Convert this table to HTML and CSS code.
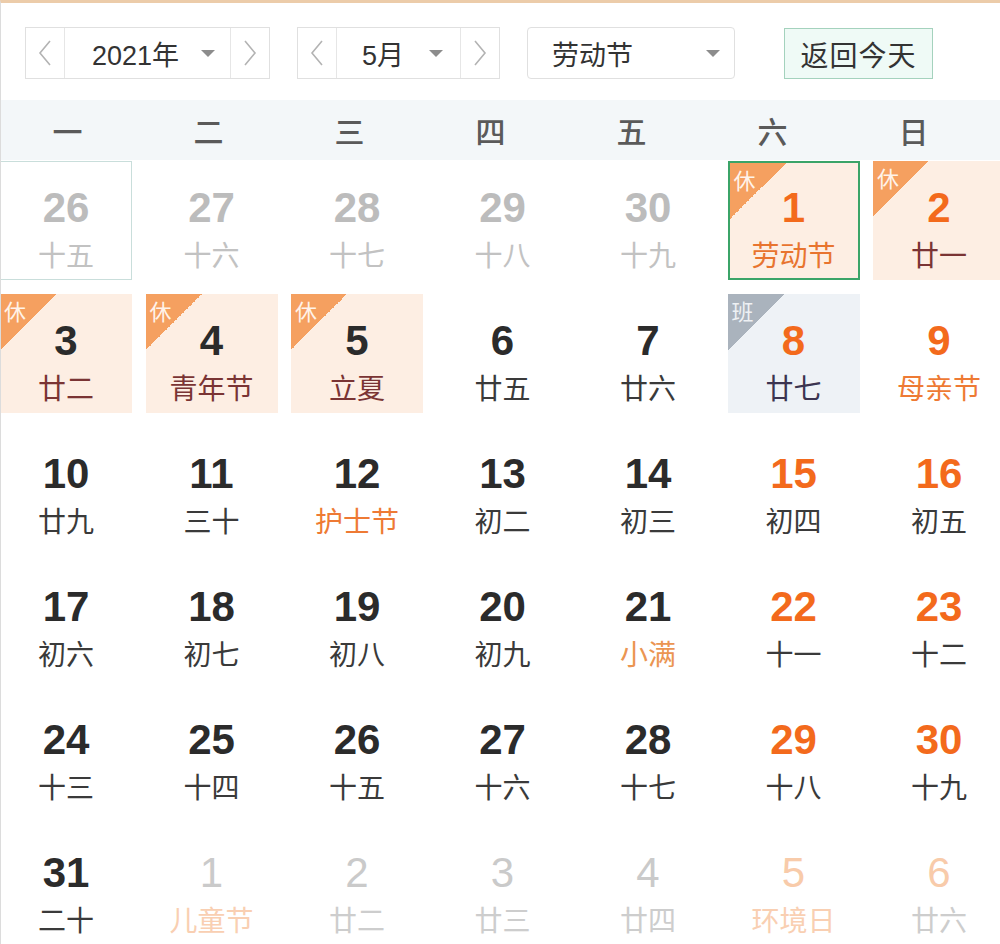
FILE: index.html
```html
<!DOCTYPE html>
<html lang="zh-CN">
<head>
<meta charset="utf-8">
<title>万年历</title>
<link rel="stylesheet" href="styles.css">
</head>
<body>
<div class="page">
  <div class="toolbar">
    <div class="stepper year">
      <span class="arrow"><svg width="14" height="26" viewBox="0 0 14 26"><polyline points="12,1 2,13 12,25" fill="none" stroke="#b3b3b3" stroke-width="1.6"/></svg></span>
      <span class="mid"><span>2021年</span><i class="caret"></i></span>
      <span class="arrow"><svg width="14" height="26" viewBox="0 0 14 26"><polyline points="2,1 12,13 2,25" fill="none" stroke="#b3b3b3" stroke-width="1.6"/></svg></span>
    </div>
    <div class="stepper month">
      <span class="arrow"><svg width="14" height="26" viewBox="0 0 14 26"><polyline points="12,1 2,13 12,25" fill="none" stroke="#b3b3b3" stroke-width="1.6"/></svg></span>
      <span class="mid"><span>5月</span><i class="caret"></i></span>
      <span class="arrow"><svg width="14" height="26" viewBox="0 0 14 26"><polyline points="2,1 12,13 2,25" fill="none" stroke="#b3b3b3" stroke-width="1.6"/></svg></span>
    </div>
    <div class="select"><span>劳动节</span><i class="caret"></i></div>
    <div class="today">返回今天</div>
  </div>

  <div class="weekdays">
    <span>一</span><span>二</span><span>三</span><span>四</span><span>五</span><span>六</span><span>日</span>
  </div>

  <div class="grid">
    <div class="cell other sel-gray"><b>26</b><em>十五</em></div>
    <div class="cell other"><b>27</b><em>十六</em></div>
    <div class="cell other"><b>28</b><em>十七</em></div>
    <div class="cell other"><b>29</b><em>十八</em></div>
    <div class="cell other"><b>30</b><em>十九</em></div>
    <div class="cell rest wkend today-sel"><span class="tag">休</span><b>1</b><em class="fest">劳动节</em></div>
    <div class="cell rest wkend"><span class="tag">休</span><b>2</b><em>廿一</em></div>

    <div class="cell rest"><span class="tag">休</span><b>3</b><em>廿二</em></div>
    <div class="cell rest"><span class="tag">休</span><b>4</b><em>青年节</em></div>
    <div class="cell rest"><span class="tag">休</span><b>5</b><em>立夏</em></div>
    <div class="cell"><b>6</b><em>廿五</em></div>
    <div class="cell"><b>7</b><em>廿六</em></div>
    <div class="cell work wkend"><span class="tag">班</span><b>8</b><em>廿七</em></div>
    <div class="cell wkend"><b>9</b><em class="fest">母亲节</em></div>

    <div class="cell"><b>10</b><em>廿九</em></div>
    <div class="cell"><b>11</b><em>三十</em></div>
    <div class="cell"><b>12</b><em class="fest">护士节</em></div>
    <div class="cell"><b>13</b><em>初二</em></div>
    <div class="cell"><b>14</b><em>初三</em></div>
    <div class="cell wkend"><b>15</b><em>初四</em></div>
    <div class="cell wkend"><b>16</b><em>初五</em></div>

    <div class="cell"><b>17</b><em>初六</em></div>
    <div class="cell"><b>18</b><em>初七</em></div>
    <div class="cell"><b>19</b><em>初八</em></div>
    <div class="cell"><b>20</b><em>初九</em></div>
    <div class="cell"><b>21</b><em class="term">小满</em></div>
    <div class="cell wkend"><b>22</b><em>十一</em></div>
    <div class="cell wkend"><b>23</b><em>十二</em></div>

    <div class="cell"><b>24</b><em>十三</em></div>
    <div class="cell"><b>25</b><em>十四</em></div>
    <div class="cell"><b>26</b><em>十五</em></div>
    <div class="cell"><b>27</b><em>十六</em></div>
    <div class="cell"><b>28</b><em>十七</em></div>
    <div class="cell wkend"><b>29</b><em>十八</em></div>
    <div class="cell wkend"><b>30</b><em>十九</em></div>

    <div class="cell"><b>31</b><em>二十</em></div>
    <div class="cell next"><b>1</b><em class="fest">儿童节</em></div>
    <div class="cell next"><b>2</b><em>廿二</em></div>
    <div class="cell next"><b>3</b><em>廿三</em></div>
    <div class="cell next"><b>4</b><em>廿四</em></div>
    <div class="cell next wkend"><b>5</b><em class="fest">环境日</em></div>
    <div class="cell next wkend"><b>6</b><em>廿六</em></div>
  </div>
</div>
</body>
</html>
```

FILE: styles.css
```css
html, body {
  margin: 0;
  padding: 0;
  background: #fff;
}
body {
  font-family: "Liberation Sans", "Noto Sans CJK SC", sans-serif;
  color: #333;
  overflow: hidden;
}
.page {
  width: 1000px;
  height: 944px;
  box-sizing: border-box;
  border-top: 3px solid #ecccaa;
  border-left: 1px solid #dcdcdc;
  overflow: hidden;
}

/* toolbar */
.toolbar {
  display: flex;
  align-items: flex-start;
  padding: 24px 0 0 24px;
  height: 52px;
  font-size: 27px;
  color: #333;
}
.stepper {
  display: flex;
  height: 52px;
  box-sizing: border-box;
  border: 1px solid #e0e0e0;
  margin-right: 27px;
}
.stepper.year { width: 245px; }
.stepper.month { width: 203px; }
.arrow {
  width: 38px;
  display: flex;
  align-items: center;
  justify-content: center;
  flex: none;
}
.mid {
  flex: 1;
  display: flex;
  align-items: center;
  justify-content: space-between;
  padding: 0 15px 0 27px;
  border-left: 1px solid #e6e6e6;
  border-right: 1px solid #e6e6e6;
}
.month .mid { padding: 0 17px 0 25px; }
.caret {
  width: 0;
  height: 0;
  border-left: 7px solid transparent;
  border-right: 7px solid transparent;
  border-top: 7px solid #8c8c8c;
}
.select {
  width: 208px;
  height: 52px;
  box-sizing: border-box;
  border: 1px solid #e0e0e0;
  border-radius: 4px;
  display: flex;
  align-items: center;
  justify-content: space-between;
  padding: 0 14px 0 24px;
  margin-right: 49px;
}
.today {
  width: 149px;
  height: 51px;
  margin-top: 1px;
  box-sizing: border-box;
  border: 1px solid #a4d2bd;
  background: #effaf6;
  display: flex;
  align-items: center;
  justify-content: center;
  font-size: 28px;
  letter-spacing: 1px;
}

/* weekday header */
.weekdays {
  margin-top: 21px;
  height: 60px;
  background: #f3f7f9;
  display: grid;
  grid-template-columns: repeat(7, 141px);
  margin-left: -4px;
  width: 1004px;
  align-items: center;
  font-family: "Noto Sans CJK SC", sans-serif;
  font-size: 30px;
  font-weight: 500;
  color: #5a5a5a;
}
.weekdays span {
  text-align: center;
}

/* grid */
.grid {
  margin-top: 1px;
  margin-left: -1px;
  display: grid;
  grid-template-columns: repeat(7, 132px);
  grid-auto-rows: 119px;
  column-gap: 13.5px;
  row-gap: 14px;
}
.cell {
  position: relative;
  box-sizing: border-box;
  display: flex;
  flex-direction: column;
  align-items: center;
  padding-top: 24px;
  color: #2b2b2b;
}
.cell b {
  display: block;
  font-family: "Liberation Sans", sans-serif;
  font-weight: bold;
  font-size: 42px;
  line-height: 45px;
  color: #2b2b2b;
  position: relative;
}
.cell em {
  display: block;
  font-style: normal;
  font-family: "Noto Sans CJK SC", sans-serif;
  font-size: 28px;
  line-height: 32px;
  margin-top: 8px;
  color: #3a3a3a;
  position: relative;
}
.cell.wkend b { color: #f36a1c; }
.cell em.fest { color: #ee7a34; }
.cell em.term { color: #eb9552; }

.cell.other b { color: #bcbcbc; }
.cell.other em { color: #c2c2c2; }
.sel-gray { border: 1px solid #c9dedb; padding-top: 23px; }

.cell.next b { color: #cacaca; font-weight: normal; }
.cell.next em { color: #cdcdcd; }
.cell.next.wkend b { color: #f8cbaa; }
.cell.next em.fest { color: #f9cfb2; }

.cell.rest { background: #fdeee3; }
.cell.rest em { color: #7a3434; }
.cell.rest em.fest { color: #e8742f; }
.cell.work { background: #eef2f6; }
.cell.work em { color: #3b3450; }

.today-sel {
  border: 2px solid #3ba468;
  padding-top: 22px;
}

.tag {
  position: absolute;
  left: 0;
  top: 0;
  width: 56px;
  height: 56px;
  background: linear-gradient(to bottom right, #f5a060 50%, transparent 50%);
  color: #fff3ea;
  font-family: "Noto Sans CJK SC", sans-serif;
  font-size: 22px;
  line-height: 28px;
  padding-left: 4px;
  padding-top: 2px;
  box-sizing: border-box;
}
.work .tag {
  background: linear-gradient(to bottom right, #aab3bd 50%, transparent 50%);
  color: #eef1f4;
}
```
